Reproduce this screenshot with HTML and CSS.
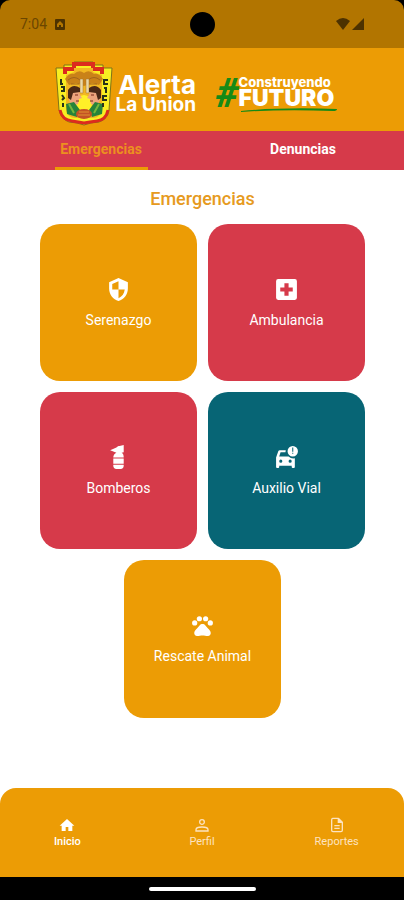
FILE: index.html
```html
<!DOCTYPE html>
<html lang="es">
  <head>
    <meta charset="UTF-8" />
    <meta name="viewport" content="width=device-width, initial-scale=1.0" />
    <title>Alerta La Union</title>
    <link rel="stylesheet" href="styles.css">
  </head>
  <body>
    <div class="screen">
      <div class="status-bar">
        <div class="status-left">
          <span>7:04</span>
          <svg width="10" height="11" viewBox="0 0 10 11">
            <rect width="10" height="11" rx="1" fill="#4d3200" />
            <path d="M2 8V5l3-3 3 3v3H6V6H4v2z" fill="#b27500" />
          </svg>
        </div>
        <span class="camera"></span>
        <div class="status-right">
          <svg width="14" height="12" viewBox="0 0 14 12">
            <path d="M0 3Q7-3 14 3L7 12z" fill="#4d3200" />
          </svg>
          <svg width="12" height="12" viewBox="0 0 12 12">
            <path d="M12 0v12H0z" fill="#4d3200" />
          </svg>
        </div>
      </div>

      <header class="header">
        <div class="brand">
          <svg class="crest" width="58" height="66" viewBox="0 0 58 66">
            <path d="M1 7h8V4h10V1h19v3h10v3h9l-3 42q-1 9-10 12l-8 1-7 2-7-2-8-1Q6 58 4 49z" fill="#f8ee22" stroke="#7d7418" stroke-width="1" />
            <path d="M10 13V8h9V3h19v5h9v5" fill="none" stroke="#dc2b1e" stroke-width="4" />
            <path d="M5 49q2 10 12 11l6 1 6 1 6-1 7-1q9-1 11-11" fill="none" stroke="#dc2b1e" stroke-width="3" />
            <path d="M11 14l8-3V7h19v4l9 3v35q-2 8-9 8H20q-7 0-9-8z" fill="#f2b722" />
            <path d="M10 18q4-6 9-5 5-5 10-1 5-4 10 1 5-1 9 5l-4 6-7-2-8 3-8-3-7 2z" fill="#c98218" />
            <path d="M13 19q6-5 12 0m8 0q6-5 12 0M16 23h8m10 0h8" fill="none" stroke="#a2641c" stroke-width="1" />
            <path d="M25 18h3v14h-3zM31 18h3v14h-3z" fill="#ead9a8" stroke="#a6762c" stroke-width=".5" />
            <ellipse cx="29" cy="43" rx="8" ry="9" fill="#fff028" />
            <path d="M14 30q4-5 10-2l1 6 2 3-3 1-1 5-6 2-3-6z" fill="#eda47d" />
            <path d="M45 30q-4-5-10-2l-1 6-2 3 3 1 1 5 6 2 3-6z" fill="#eda47d" />
            <path d="M13 37v-8q5-7 12-2v4l-7 1-2 7zM46 37v-8q-5-7-12-2v4l7 1 2 7z" fill="#4a2816" />
            <path d="M20 34h3m13 0h3M21 40h3m11 0h3" stroke="#7a291a" />
            <path d="M11 43l8-2 6 8-3 7-10-3zM48 43l-8-2-6 8 3 7 10-3z" fill="#26833b" />
            <path d="M14 43l5 9m25-9-5 9" stroke="#75b63b" stroke-width="2" />
            <ellipse cx="29" cy="53" rx="8" ry="5" fill="#c35225" />
            <path d="M24 51h10M23 54h12" stroke="#e19231" />
            <path d="M6 18v5h2m-2 3h3v4H6m1 4 2 3-2 2m1 3v4M53 19h-4v4h4m-4 4h3m-1 0v5m1 3h-4v4h4m-4 3v4" fill="none" stroke="#28321a" stroke-width="2" />
          </svg>
          <div class="brand-name">
            <span class="brand-top">Alerta</span>
            <span class="brand-bottom">La Union</span>
          </div>
        </div>
        <div class="slogan">
          <span class="hash">#</span>
          <div class="slogan-text">
            <span class="slogan-top">Construyendo</span>
            <span class="slogan-bottom">FUTURO</span>
            <svg class="swoosh" viewBox="0 0 98 4" preserveAspectRatio="none">
              <path d="M2 3Q42-1 98 1 98 3 94 3 44 1 2 4z" fill="#168a16" />
            </svg>
          </div>
        </div>
      </header>

      <nav class="tabs">
        <a class="tab active" href="#emergencias">Emergencias</a>
        <a class="tab" href="#denuncias">Denuncias</a>
      </nav>

      <main class="content" id="emergencias">
        <h1>Emergencias</h1>
        <div class="cards">
          <button class="card orange">
            <svg viewBox="0 0 24 24"><path fill-rule="evenodd" d="M12 1 3 5v6c0 5.550 3.840 10.740 9 12 5.160-1.260 9-6.450 9-12V5zm0 11h6c-.53 4-2.800 7-6 8.300V12H6V6.800l6-2.700z" /></svg>
            <span>Serenazgo</span>
          </button>
          <button class="card red">
            <svg viewBox="0 0 24 24"><path fill-rule="evenodd" d="M4 2h16q2 0 2 2v16q0 2-2 2H4q-2 0-2-2V4q0-2 2-2zm6 4v4H6v4h4v4h4v-4h4v-4h-4V6z" /></svg>
            <span>Ambulancia</span>
          </button>
          <button class="card red">
            <svg viewBox="0 0 24 24"><path d="M7 19h10v1q0 3-3 3h-4q-3 0-3-3zM7 13h10v5H7zM17 12H7c0-2.200 1.300-3.800 3-4.600L4 5l6-2.500C10.600 1.500 11.700 1 13 1l4-1v7l-2 .4c1.500.8 2 2.400 2 4.600z" /></svg>
            <span>Bomberos</span>
          </button>
          <button class="card teal">
            <svg viewBox="0 0 24 24"><path fill-rule="evenodd" d="M18 1a5 5 0 1 1 0 10 5 5 0 0 1 0-10zm-.5 1.500v4h1v-4zm0 5v1h1v-1zM11.300 5H5.500q-1 0-1.400 1L2 12v9q0 1 1 1h1q1 0 1-1v-1h12v1q0 1 1 1h1q1 0 1-1v-8.300q-3.500.7-6-1.700H5l1.300-4H11zM6.500 14a1.500 1.500 0 1 1 0 3 1.500 1.500 0 0 1 0-3zm9 0a1.500 1.500 0 1 1 0 3 1.500 1.500 0 0 1 0-3z" /></svg>
            <span>Auxilio Vial</span>
          </button>
          <button class="card orange last">
            <svg viewBox="0 0 24 24"><circle cx="4.500" cy="9.500" r="2.500" /><circle cx="9" cy="5.500" r="2.500" /><circle cx="15" cy="5.500" r="2.500" /><circle cx="19.500" cy="9.500" r="2.500" /><path d="M17.300 14.900c-.9-1-1.600-1.900-2.500-2.900-1.500-1.800-4.100-1.800-5.600 0-.9 1-1.600 1.900-2.500 2.900-1.300 1.300-2.900 2.700-2.600 4.700.3 1.200 1.100 2.300 2.600 2.500 1 .2 3.500-.4 5.300-.4s4.300.6 5.300.4c1.500-.2 2.300-1.300 2.600-2.500.3-2-1.300-3.400-2.600-4.700z" /></svg>
            <span>Rescate Animal</span>
          </button>
        </div>
      </main>

      <nav class="bottom-nav">
        <a class="nav-item current" href="#inicio">
          <svg viewBox="0 0 24 24"><path d="M10 21v-6h4v6h6v-8h3L12 3 1 13h3v8z" /></svg>
          <span>Inicio</span>
        </a>
        <a class="nav-item" href="#perfil">
          <svg viewBox="0 0 24 24"><path fill="none" stroke="currentColor" stroke-width="2" d="M12 4a3.500 3.500 0 1 1 0 7 3.500 3.500 0 0 1 0-7zM3 21v-2q0-4 9-4t9 4v2z" /></svg>
          <span>Perfil</span>
        </a>
        <a class="nav-item" href="#reportes">
          <svg viewBox="0 0 24 24"><path fill="none" stroke="currentColor" stroke-width="2" d="M5 2h9l6 6v12q0 2-2 2H6q-2 0-2-2V4q0-2 2-2M8 13h8M8 17h8" /><path d="M13 2h2l5 5v2h-7z" /></svg>
          <span>Reportes</span>
        </a>
      </nav>
      <div class="gesture-bar"><span></span></div>
    </div>
  </body>
</html>
```

FILE: styles.css
```css
* {
  box-sizing: border-box;
}
body {
  margin: 0;
  background: #000;
  font-family: Roboto, sans-serif;
}
a {
  text-decoration: none;
}
/* the black strip shows behind the rounded display corners */
.screen {
  display: flex;
  flex-direction: column;
  min-height: 100vh;
  background: linear-gradient(#000, #000) top / 100% 12px no-repeat, #fff;
}
.status-bar {
  display: grid;
  grid-template-columns: 1fr auto 1fr;
  align-items: center;
  height: 48px;
  padding: 0 20px;
  border-radius: 10px 10px 0 0;
  background: #b27500;
  color: #6b4600;
  font-size: 14px;
}
.status-left,
.status-right {
  display: flex;
  align-items: center;
  gap: 8px;
}
.status-right {
  justify-content: flex-end;
  gap: 2px;
  padding-right: 20px;
}
.camera {
  width: 25px;
  height: 25px;
  border-radius: 50%;
  background: #000;
}
.header {
  display: flex;
  justify-content: center;
  align-items: center;
  gap: 20px;
  height: 83px;
  padding: 8px 12px 0 0;
  background: #ec9c05;
  color: #fff;
}
.brand {
  display: flex;
  align-items: center;
  gap: 2px;
}
.brand-name {
  display: flex;
  flex-direction: column;
  align-items: flex-end;
  font-family: Inter, sans-serif;
  font-weight: 700;
}
.brand-top {
  font-size: 26px;
  line-height: 22px;
}
.brand-bottom {
  font-size: 19px;
  line-height: 18px;
}
.slogan {
  display: flex;
  align-items: center;
  font-family: Inter, sans-serif;
  font-weight: 900;
}
.hash {
  color: #168a16;
  font-family: Roboto, sans-serif;
  font-size: 40px;
  line-height: 40px;
  font-style: italic;
}
.slogan-text {
  display: flex;
  flex-direction: column;
}
.slogan-top {
  font-size: 13px;
  line-height: 14px;
  font-weight: 800;
}
.slogan-bottom {
  font-size: 23px;
  line-height: 19px;
}
.swoosh {
  width: 100%;
  height: 4px;
}
.tabs {
  display: flex;
  height: 39px;
  background: #d63a4a;
}
.tab {
  flex: 1;
  display: flex;
  flex-direction: column;
  align-items: center;
  justify-content: space-between;
  padding-top: 9px;
  color: #fff;
  font-size: 14px;
  line-height: 18px;
  font-weight: 700;
}
.tab.active {
  color: #ec9020;
}
.tab.active::after {
  content: "";
  width: 93px;
  height: 3px;
  background: #ec9c05;
}
.content {
  flex: 1;
  padding: 18px 39px 20px 40px;
}
h1 {
  margin: 0 0 14px;
  color: #e69a20;
  font-size: 18px;
  line-height: 22px;
  font-weight: 500;
  text-align: center;
}
.cards {
  display: grid;
  grid-template-columns: 1fr 1fr;
  gap: 11px;
}
.card {
  display: flex;
  flex-direction: column;
  align-items: center;
  justify-content: center;
  gap: 9px;
  aspect-ratio: 1;
  padding: 0;
  border: none;
  border-radius: 20px;
  color: #fff;
  font-family: inherit;
  font-size: 14px;
  line-height: 18px;
  cursor: pointer;
}
.card svg {
  width: 25px;
  height: 25px;
  fill: currentColor;
}
.orange {
  background: #ec9c05;
}
.red {
  background: #d63a4a;
}
.teal {
  background: #076575;
}
.last {
  grid-column: 1 / -1;
  justify-self: center;
  width: calc(50% - 5px);
}
.bottom-nav {
  display: flex;
  height: 89px;
  border-radius: 16px 16px 0 0;
  background: #ec9c05;
}
.nav-item {
  flex: 1;
  display: flex;
  flex-direction: column;
  align-items: center;
  justify-content: center;
  gap: 2px;
  color: #fde3c0;
  font-size: 11px;
  line-height: 14px;
}
.nav-item svg {
  width: 16px;
  height: 16px;
  fill: currentColor;
}
.nav-item.current {
  color: #fff;
  font-weight: 500;
}
.gesture-bar {
  display: flex;
  align-items: center;
  justify-content: center;
  height: 23px;
  background: #000;
}
.gesture-bar span {
  width: 107px;
  height: 4px;
  border-radius: 2px;
  background: #fff;
}
```
